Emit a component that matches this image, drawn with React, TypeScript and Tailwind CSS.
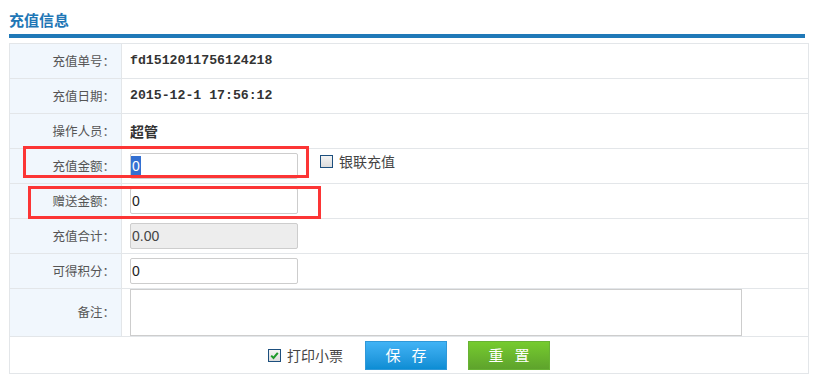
import React from 'react';

const cjk = { fontFamily: '"Noto Sans CJK SC", sans-serif' };
const mono = { fontFamily: '"Liberation Mono", "Noto Sans CJK SC", monospace' };
const arial = { fontFamily: '"Liberation Sans", Arial, sans-serif' };

const Row = ({ label, children, h = 'h-[35px]', last = false }: { label: string; children?: React.ReactNode; h?: string; last?: boolean }) => (
  <div className={`flex ${h} ${last ? '' : 'border-b border-[#e3e6e9]'}`}>
    <div className="w-[112px] shrink-0 bg-[#f1f7fd] border-r border-[#e3e6e9] flex items-center justify-end pr-[6px] text-[12.5px] text-[#555]" style={cjk}>
      {label}
    </div>
    <div className="flex-1 flex items-center pl-[8px]">{children}</div>
  </div>
);

const TextBox = ({ value, disabled = false, selected = false }: { value: string; disabled?: boolean; selected?: boolean }) => (
  <div
    className={`w-[168px] h-[26px] border border-[#cdcdcd] rounded-[2px] flex items-center text-[14px] text-[#222] ${disabled ? 'bg-[#ededed] text-[#444]' : 'bg-white'}`}
    style={arial}
  >
    {selected ? <span className="bg-[#3370d2] text-white px-[1px] leading-[20px]">{value}</span> : <span className="pl-[1px]">{value}</span>}
  </div>
);

const CheckBox = ({ checked }: { checked?: boolean }) => (
  <span className="w-[13px] h-[13px] border border-[#1d4f7e] bg-gradient-to-b from-[#f4f4f4] to-[#dcdcdc] flex items-center justify-center">
    {checked && (
      <svg width="9" height="9" viewBox="0 0 9 9">
        <path d="M1.2 4.6 L3.5 7 L7.8 1.8" fill="none" stroke="#1d9a2a" strokeWidth="2" />
      </svg>
    )}
  </span>
);

export default function App() {
  return (
    <div className="relative w-[814px] h-[380px] bg-white px-[9px]">
      <div className="h-[34px] pt-[11px] text-[15px] leading-[17px] font-bold text-[#1f77b6]" style={cjk}>
        充值信息
      </div>
      <div className="h-[4px] bg-[#2079b8]" />
      <div className="mt-[5px] w-[800px] border border-[#e3e6e9] flex flex-col">
        <Row label="充值单号：">
          <span className="text-[13.2px] font-bold text-[#333]" style={mono}>fd1512011756124218</span>
        </Row>
        <Row label="充值日期：">
          <span className="text-[13.2px] font-bold text-[#333]" style={mono}>2015-12-1 17:56:12</span>
        </Row>
        <Row label="操作人员：">
          <span className="text-[14px] font-bold text-[#333]" style={cjk}>超管</span>
        </Row>
        <Row label="充值金额：">
          <TextBox value="0" selected />
          <span className="ml-[22px] self-start mt-[3px] flex items-center gap-[6px] text-[14px] leading-[18px] text-[#444]" style={cjk}>
            <CheckBox />
            银联充值
          </span>
        </Row>
        <Row label="赠送金额：">
          <TextBox value="0" />
        </Row>
        <Row label="充值合计：">
          <TextBox value="0.00" disabled />
        </Row>
        <Row label="可得积分：">
          <TextBox value="0" />
        </Row>
        <Row label="备注：" h="h-[48px]">
          <div className="w-[612px] h-[47px] border border-[#cdcdcd] bg-white" />
        </Row>
        <div className="h-[36px] flex items-center justify-center">
          <span className="flex items-center gap-[6px] text-[14px] text-[#444]" style={cjk}>
            <CheckBox checked />
            打印小票
          </span>
          <button className="ml-[22px] w-[82px] h-[29px] border border-[#2f98d8] bg-gradient-to-b from-[#40b3f5] to-[#0b8dd4] text-white text-[15px] tracking-[11px] pl-[11px]" style={cjk}>
            保存
          </button>
          <button className="ml-[21px] w-[82px] h-[29px] border border-[#68b234] bg-gradient-to-b from-[#76cb2e] to-[#5ea32c] text-white text-[15px] tracking-[11px] pl-[11px]" style={cjk}>
            重置
          </button>
        </div>
      </div>
      <div className="absolute left-[23px] top-[146px] w-[286px] h-[32px] border-[3px] border-[#fc3535]" />
      <div className="absolute left-[28px] top-[186px] w-[293px] h-[33px] border-[3px] border-[#fc3535]" />
    </div>
  );
}
